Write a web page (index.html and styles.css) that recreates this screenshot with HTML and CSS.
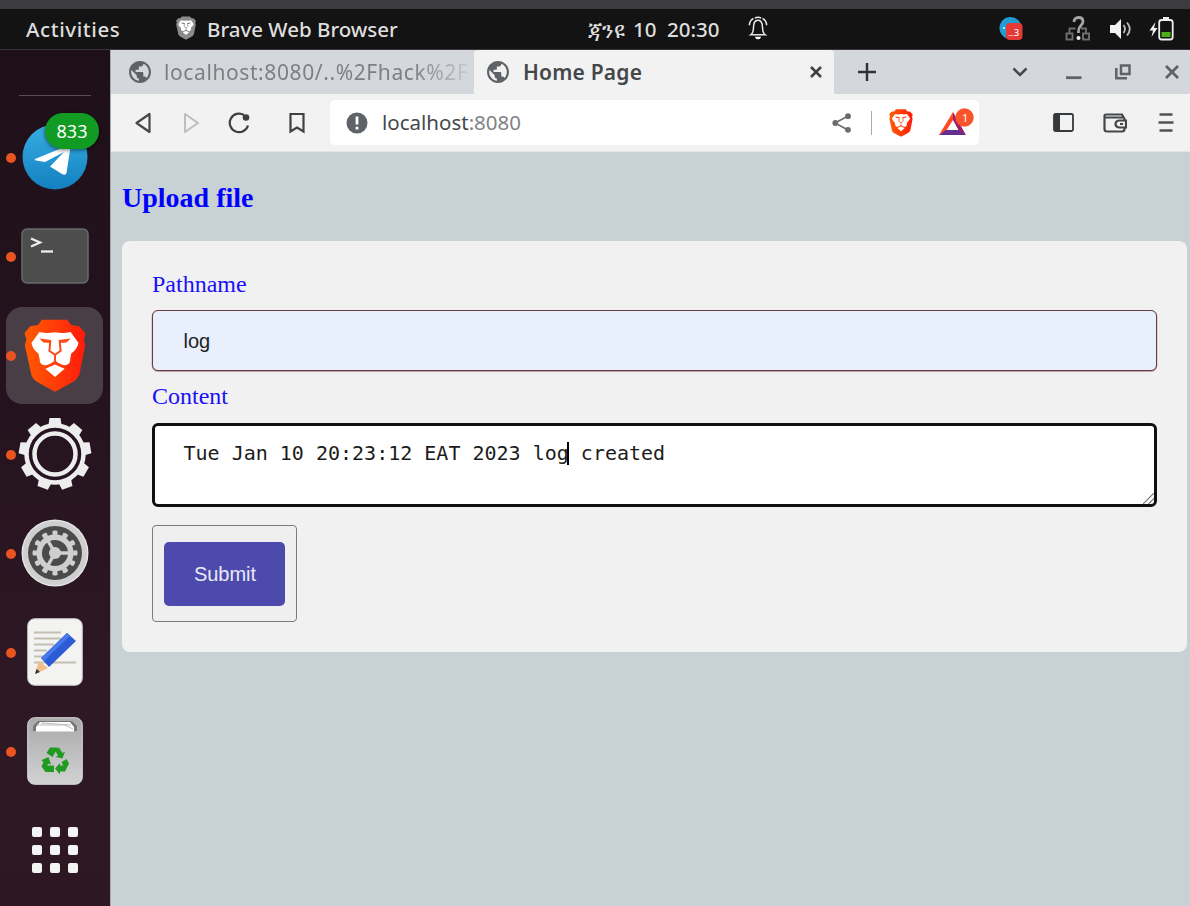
FILE: index.html
```html
<!DOCTYPE html>
<html lang="en">
<head>
<meta charset="utf-8">
<title>Home Page</title>
<link rel="stylesheet" href="styles.css">
</head>
<body>
<svg width="0" height="0" class="defs">
  <defs>
    <linearGradient id="lion" x1="0" x2="1"><stop offset="0" stop-color="#ff5a00"/><stop offset=".55" stop-color="#ff3a08"/><stop offset="1" stop-color="#ff1a0c"/></linearGradient>
    <linearGradient id="sky" x1="0" x2="0" y1="0" y2="1"><stop offset="0" stop-color="#37aee2"/><stop offset="1" stop-color="#1380c0"/></linearGradient>
    <linearGradient id="bin" x1="0" x2="0" y1="0" y2="1"><stop offset="0" stop-color="#a9a9a9"/><stop offset="1" stop-color="#d2d2d2"/></linearGradient>
    <symbol id="shield" viewBox="72 56 186 220">
      <path d="M125 58H202L214 74 238 78 257 100 252 118 256 135 238 225Q232 238 220 245L165 275 110 245Q98 238 94 225L74 135 79 118 73 98 90 78 114 74Z" fill="var(--mane)"/>
      <path d="M118 95Q140 101 165 96 190 101 212 95L236 128Q232 146 214 160L211 175Q212 190 200 195 186 198 165 181 144 198 130 195 118 190 119 178L115 160Q98 148 94 128ZM165 193 194 206 165 231 136 206Z" fill="var(--face)"/>
      <path d="M151 123 148 152 165 164 182 152 179 123M165 163V184" fill="none" stroke="var(--line)" stroke-width="6"/>
      <path d="M118 115 154 119 152 128 130 127ZM212 115 176 119 178 128 200 127Z" fill="var(--line)"/>
    </symbol>
    <symbol id="globe" viewBox="2 2 20 20"><path fill="#5f6368" d="M12 2C6.480 2 2 6.480 2 12s4.480 10 10 10 10-4.480 10-10S17.520 2 12 2zm-1 17.930c-3.950-.49-7-3.850-7-7.930 0-.62.08-1.210.21-1.790L9 15v1c0 1.100.9 2 2 2v1.930zm6.900-2.540c-.26-.81-1-1.390-1.900-1.390h-1v-3c0-.55-.45-1-1-1H8v-2h2c.55 0 1-.45 1-1V7h2c1.100 0 2-.9 2-2v-.41c2.930 1.190 5 4.060 5 7.410 0 2.080-.8 3.970-2.100 5.390z"/></symbol>
  </defs>
</svg>
<div class="screen">
  <header class="topbar">
    <span class="activities">Activities</span>
    <svg class="app-icon gray" width="20" height="24"><use href="#shield"/></svg>
    <span class="app-name">Brave Web Browser</span>
    <span class="clock"><span class="month">ጃንዩ</span><span class="day">10</span><span class="time">20:30</span></span>
    <svg class="bell" width="20" height="26" viewBox="0 0 22 26" fill="none" stroke="#e8e8e8" stroke-width="1.700"><path d="M3 20.500c2-1.500 3-3 3-7.500C6 7 7.500 4.500 11 4.500S16 7 16 13c0 4.500 1 6 3 7.500ZM6 2.500Q1.800 4.500 1.500 10M16 2.500Q20.200 4.500 20.500 10M7.500 2Q11 .5 14.500 2"/><path d="M7.500 22.500h7q-1 3-3.500 3t-3.500-3" fill="#fff" stroke="none"/></svg>
    <div class="tray">
      <svg width="24" height="24" viewBox="0 0 24 24"><circle cx="11.500" cy="11" r="11" fill="#239bd3"/><circle cx="5" cy="11" r="1" fill="#fff"/><rect x="7" y="6" width="16.500" height="17" rx="4" fill="#e53935"/><text x="15" y="18.500" font-size="9" class="tiny">3</text><path d="M9.500 18.500h5" stroke="#f5a5a0"/></svg>
      <svg class="net" width="26" height="26" viewBox="0 0 26 26" fill="none" stroke="#6f6f6f" stroke-width="1.900"><rect x="1.500" y="17.500" width="6" height="6"/><rect x="18" y="17.500" width="6" height="6"/><path d="M4.500 17v-4.500h6M21 17v-4.500h-5"/><path d="M9 6q0-4.500 4.500-4.500T18 5.500C18 9.500 13.500 9 13.500 15v2" stroke="#a5a5a5" stroke-width="2.800"/><circle cx="13.500" cy="22" r="2" fill="#eee" stroke="none"/></svg>
      <svg class="vol" width="24" height="22" viewBox="0 0 24 22"><path d="M1 7h5l6-6v20l-6-6H1Z" fill="#f2f2f2"/><path d="M14.500 7q3 4 0 8M18 4.500q5.500 6.500 0 13" fill="none" stroke="#bbb" stroke-width="1.800"/></svg>
      <svg class="bat" width="25" height="24" viewBox="0 0 25 24"><path d="M6.500 5 .5 13.500H4L2.500 20 8.500 11H5Z" fill="#f2f2f2"/><rect x="10.200" y="3" width="13.500" height="19.500" rx="2.500" fill="none" stroke="#eee" stroke-width="1.800"/><path d="M14 1h6" stroke="#eee" stroke-width="2"/><rect x="12.500" y="15" width="9" height="5" fill="#4caf17"/></svg>
    </div>
  </header>
  <div class="desktop">
    <nav class="dock">
      <div class="rule"></div>
      <div class="slot"><i class="dot"></i>
        <svg width="66" height="66" viewBox="0 0 66 66"><circle cx="33" cy="33" r="32.500" fill="url(#sky)"/><path d="M13 35 46 21.500Q49 20.500 48.300 24L44.500 49Q43.500 52 40 50L28 42.500 42 28 23 38 14 36.500Q12 36 13 35Z" fill="#fff"/></svg>
        <span class="badge">833</span></div>
      <div class="slot"><i class="dot"></i>
        <svg width="68" height="56" viewBox="0 0 68 56"><rect x="1" y="1" width="66" height="54" rx="5" fill="#4d4d4d" stroke="#696969" stroke-width="1.500"/><path d="M10 10.500 19 14.500 10 18.500" fill="none" stroke="#eee" stroke-width="2.300"/><path d="M20 23.500h12" stroke="#eee" stroke-width="2.300"/></svg></div>
      <div class="slot active"><i class="dot"></i>
        <svg class="color" width="62" height="73"><use href="#shield"/></svg></div>
      <div class="slot"><i class="dot"></i>
        <svg width="74" height="74" viewBox="-37 -37 74 74" fill="none" stroke="#ededed"><circle r="28.500" stroke-width="4.500"/><circle r="20.500" stroke-width="4.500"/><g fill="#ededed" stroke="none"><path id="tooth" d="M-6.500-29-5.500-36H5.500L6.500-29Z"/><use href="#tooth" transform="rotate(40)"/><use href="#tooth" transform="rotate(80)"/><use href="#tooth" transform="rotate(120)"/><use href="#tooth" transform="rotate(160)"/><use href="#tooth" transform="rotate(200)"/><use href="#tooth" transform="rotate(240)"/><use href="#tooth" transform="rotate(280)"/><use href="#tooth" transform="rotate(320)"/></g></svg></div>
      <div class="slot"><i class="dot"></i>
        <svg width="68" height="68" viewBox="-34 -34 68 68" fill="none" stroke="#cfcfcf"><circle r="33.500" fill="#e4e4e4" stroke="none"/><circle r="29.500" stroke="#cfcfcf" stroke-width="5"/><circle r="27" fill="#4b4b4b" stroke="none"/><circle r="20" stroke-width="4" pathLength="24" stroke-dasharray="1 1" stroke-dashoffset=".5"/><circle r="15.800" stroke-width="5.500"/><circle r="21.500" stroke-width="2" pathLength="24" stroke-dasharray=".6 1.400" stroke-dashoffset=".3"/><circle r="6" fill="#cfcfcf" stroke="none"/><path d="M0 0H15M0 0-7.500-13M0 0-7.500 13" stroke-width="3.500"/></svg></div>
      <div class="slot"><i class="dot"></i>
        <svg width="56" height="68" viewBox="0 0 56 68"><rect x=".7" y=".7" width="54.600" height="66.600" rx="7" fill="#f3f3f1" stroke="#cbc8c8"/><path d="M7 14.500H34M7 20.500H34M7 26.500H27M7 32.500H20M7 38.500H16M7 44.500H49" stroke="#c3c0b2" stroke-width="2"/><path d="M8 56 12 43 21 50Z" fill="#efbd85"/><path d="M8 56 9.500 51 13 54Z" fill="#333"/><path d="M14 40 40 15 49 23 22 49Z" fill="#2c5bd6"/><path d="M14 40 40 15 43 18 17 43Z" fill="#4778ec"/></svg></div>
      <div class="slot"><i class="dot"></i>
        <svg width="56" height="68" viewBox="0 0 56 68"><rect x=".7" y=".7" width="54.600" height="66.600" rx="7" fill="url(#bin)" stroke="#d9d9d9"/><path d="M6 14V9L11 4H45L50 9V14Z" fill="#777"/><path d="M9 14.500V10L13 5H43L47 10V14.500Z" fill="#fff"/><path d="M10 8H38L46 12M14 6 44 8" fill="none" stroke="#bbb"/>
        <g fill="#209a20"><path d="M19.500 36 23 30.500H31L27.500 36.500 25.500 40ZM32 30.500 35.500 36 38 34.500 35.500 41.500 28.500 40 31 38.500 28 33.500Z"/><path d="M34.500 45 39.500 42 42 46.500 38 54.500H33V57.500L28 51.500 33 46V48.500H36Z"/><path d="M14.500 43 21.500 40 24 47.500 21.500 46.800 20 48.500H27V55H18.500L14.500 49.500 16.500 45.500Z"/></g></svg></div>
      <div class="slot"><div class="grid"><b></b><b></b><b></b><b></b><b></b><b></b><b></b><b></b><b></b></div></div>
    </nav>
    <main class="window">
      <div class="tabs">
        <div class="tab idle"><svg width="22" height="22"><use href="#globe"/></svg><span>localhost:8080/..%2Fhack%2F</span></div>
        <div class="tab current"><svg width="22" height="22"><use href="#globe"/></svg><span>Home Page</span><svg class="close" width="12" height="12" viewBox="0 0 12 12"><path d="M1 1 11 11M11 1 1 11" stroke="#3c4043" stroke-width="2.500"/></svg></div>
        <svg class="plus" width="18" height="18" viewBox="0 0 18 18"><path d="M9 0V18M0 9H18" stroke="#303336" stroke-width="2.400"/></svg>
        <div class="controls">
          <svg width="16" height="10" viewBox="0 0 16 10"><path d="M1.500 1.500 8 8 14.500 1.500" fill="none" stroke="#45484b" stroke-width="2.500"/></svg>
          <svg width="16" height="16" viewBox="0 0 16 16"><path d="M0 13.700H15.500" stroke="#5f6368" stroke-width="2.800"/></svg>
          <svg width="16" height="16" viewBox="0 0 16 16" fill="none" stroke="#5f6368" stroke-width="2.500"><rect x="6" y="1.500" width="8.500" height="8.500"/><path d="M1.300 4V14.200H12"/></svg>
          <svg width="14" height="14" viewBox="0 0 14 14"><path d="M1 1 13 13M13 1 1 13" stroke="#5f6368" stroke-width="2.800"/></svg>
        </div>
      </div>
      <div class="toolbar">
        <svg class="back" width="18" height="22" viewBox="0 0 18 22"><path d="M15.500 2V20L2.500 11Z" fill="none" stroke="#45484b" stroke-width="2.200" stroke-linejoin="round"/></svg>
        <svg class="fwd" width="18" height="22" viewBox="0 0 18 22"><path d="M2 2V20L15 11Z" fill="none" stroke="#bdbdbd" stroke-width="2" stroke-linejoin="round"/></svg>
        <svg class="reload" width="23" height="22" viewBox="0 0 23 22"><path d="M16 3A9.300 9.300 0 1 0 20 13.500" fill="none" stroke="#3c4043" stroke-width="2.200"/><circle cx="18" cy="5.500" r="3.300" fill="#3c4043"/></svg>
        <svg class="mark" width="16" height="22" viewBox="0 0 16 22"><path d="M1.500 2H14.500V19.500L8 15.500 1.500 19.500Z" fill="none" stroke="#3f4245" stroke-width="2.200"/></svg>
        <div class="address">
          <svg width="22" height="22" viewBox="0 0 22 22"><circle cx="11" cy="11" r="10.500" fill="#5f6368"/><path d="M11 4.500V12.500M11 14.800V17.500" stroke="#fff" stroke-width="2.800"/></svg>
          <span class="url">localhost<em>:8080</em></span>
          <svg class="share" width="20" height="20" viewBox="0 0 20 20"><path d="M16 3 3 10 16 17" fill="none" stroke="#6c6c6c" stroke-width="1.600"/><g fill="#6c6c6c"><circle cx="3.300" cy="10" r="2.900"/><circle cx="16" cy="3.200" r="2.900"/><circle cx="16" cy="16.800" r="2.900"/></g></svg>
          <div class="bar"></div>
          <svg class="color lion" width="24" height="28"><use href="#shield"/></svg>
          <svg class="bat-icon" width="36" height="28" viewBox="0 0 36 28"><path d="M0 27 14 4V12L7 23Z" fill="#ff4724"/><path d="M14 4 27 27 20 23 14 12Z" fill="#9e1f63"/><path d="M0 27 7 22H20L27 27Z" fill="#662d91"/><circle cx="25.500" cy="9.500" r="9.200" fill="#fb542b"/><text x="23" y="13.500" font-size="11" class="tiny">1</text></svg>
        </div>
        <svg class="side" width="21" height="19" viewBox="0 0 21 19"><rect x="1" y="1" width="19" height="17" rx="1.500" fill="none" stroke="#36393c" stroke-width="1.800"/><path d="M1 1H7V18H1Z" fill="#36393c"/></svg>
        <svg class="wallet" width="24" height="20" viewBox="0 0 24 20" fill="none" stroke="#45484b" stroke-width="2.200"><path d="M21.500 7V6L19 1.500H3Q1.500 1.500 1.500 3V16Q1.500 18.500 4 18.500H19Q21.500 18.500 21.500 16V14.500M1.500 4.500H20"/><path d="M23 7.500H16Q12.500 8 12.500 11T16 14.500H23ZM17 11H20"/></svg>
        <svg class="menu" width="16" height="19" viewBox="0 0 16 19"><path d="M1.500 1.500H14.500M.5 9.500H15.500M1.500 17.500H14.500" stroke="#505356" stroke-width="2.500"/></svg>
      </div>
      <section class="page">
        <h3>Upload file</h3>
        <form class="card">
          <label>Pathname</label>
          <div class="field">log</div>
          <label>Content</label>
          <div class="area">Tue Jan 10 20:23:12 EAT 2023 log<i class="caret"></i> created<svg class="grip" width="11" height="11" viewBox="0 0 11 11"><path d="M0 11 11 0M5.500 11 11 5.500" stroke="#777" stroke-width="1.200"/></svg></div>
          <div class="outer"><div class="submit">Submit</div></div>
        </form>
      </section>
    </main>
  </div>
</div>
</body>
</html>
```

FILE: styles.css
```css
* { box-sizing: border-box; }
body { margin: 0; font-family: "Noto Sans", "Open Sans", sans-serif; }
svg { display: block; flex: none; }
.defs { position: absolute; }
.screen { width: 1190px; height: 906px; overflow: hidden; display: flex; flex-direction: column; border-top: 9px solid #3c3c3e; }
.color { --mane: url(#lion); --face: #fff; --line: #ff4a1c; }
.gray { --mane: #8b8b8b; --face: #fff; --line: #777; }
.tiny { fill: #fff; font-family: "Noto Sans", sans-serif; }

.topbar { height: 41px; flex: none; display: flex; align-items: center; background: #131313; color: #dedede; font-size: 20.5px; font-weight: 500; padding-left: 26px; white-space: nowrap; border-bottom: 1px solid #383338; }
.activities { width: 150px; letter-spacing: .6px; }
.app-icon { margin-right: 11px; margin-top: -3px; }
.app-name { width: 381px; letter-spacing: 0; }
.clock { display: flex; width: 160px; }
.month { width: 45px; font-size: 22px; line-height: 28px; }
.day { width: 34px; }
.bell { margin-top: -3px; }
.tray { display: flex; align-items: center; margin-left: 231px; margin-top: -1px; }
.net { margin-left: 42px; }
.vol { margin-left: 18px; }
.bat { margin-left: 16px; }

.desktop { display: flex; flex: 1; min-height: 0; }
.dock { width: 110px; background: linear-gradient(#1e1019, #24131e 40%, #2e1824 75%, #2c1723); display: flex; flex-direction: column; align-items: stretch; }
.rule { height: 1px; flex: none; background: #574c54; margin: 45px 19px 11.500px; }
.slot { height: 99px; flex: none; display: flex; align-items: center; justify-content: center; position: relative; }
.slot > svg { position: relative; left: -.5px; }
.dot { position: absolute; left: 6px; top: 45px; width: 10px; height: 10px; border-radius: 50%; background: #e95420; z-index: 1; }
.badge { position: absolute; left: 45px; top: 5px; width: 54px; height: 36px; border-radius: 18px; background: #129b22; color: #fff; font-size: 18px; line-height: 36px; text-align: center; box-shadow: 0 1px 4px rgba(0,0,0,.55); }
.active::before { content: ""; position: absolute; left: 6px; top: 1px; width: 97px; height: 97px; border-radius: 16px; background: #4a3e46; }
.grid { display: grid; grid-template-columns: repeat(3, 10px); gap: 8px; }
.grid b { width: 10px; height: 10px; border-radius: 2px; background: #f3f3f3; }

.window { flex: 1; min-width: 0; border-left: 1px solid #a9a9ad; background: #c8d1d3; display: flex; flex-direction: column; }
.tabs { height: 44px; flex: none; display: flex; align-items: center; background: #d4d8dc; font-size: 21px; }
.tab { height: 44px; display: flex; align-items: center; }
.idle { width: 363px; padding-left: 18px; color: #7d8083; }
.idle span { margin-left: 13px; width: 304px; overflow: hidden; white-space: nowrap; letter-spacing: .6px; -webkit-mask-image: linear-gradient(90deg, #000 82%, transparent 103%); }
.current { width: 360px; background: #f2f2f2; padding: 0 12px 0 13px; color: #45484b; font-weight: 600; border-radius: 4px 4px 0 0; }
.current span { margin-left: 14px; flex: 1; letter-spacing: .2px; }
.plus { margin-left: 24px; }
.controls { display: flex; align-items: center; margin-left: 136px; }
.controls svg + svg { margin-left: 38px; }
.controls svg:nth-child(3) { margin-left: 33px; }
.controls svg:nth-child(4) { margin-left: 34px; }

.toolbar { height: 58px; flex: none; display: flex; align-items: center; background: #f2f2f2; border-bottom: 1px solid #e2e5e6; }
.back { margin-left: 23px; }
.fwd { margin-left: 31px; }
.reload { margin-left: 27px; }
.mark { margin-left: 38px; }
.address { width: 649px; height: 45px; margin-left: 25px; border-radius: 5px; background: #fff; display: flex; align-items: center; padding-left: 16px; }
.url { margin: -2px 0 0 14px; width: 450px; font-size: 20.5px; color: #45484b; }
.url em { font-style: normal; color: #808386; }
.bar { width: 1px; height: 24px; background: #aaa; margin: 0 17px 0 19px; }
.bat-icon { margin-left: 26px; margin-top: -2px; }
.side { margin-left: 74px; }
.wallet { margin-left: 29px; }
.menu { margin-left: 31px; }

.page { padding: 30px 3px 0 11px; font-family: "Liberation Serif", serif; }
h3 { margin: 0 0 27px; font-size: 28px; line-height: 32px; color: #00f; }
.card { display: flex; flex-direction: column; height: 411px; padding: 30px; background: #f1f1f1; border-radius: 8px; }
label { font-size: 24px; line-height: 27px; color: #1b10f5; }
.field { height: 61px; flex: none; margin: 12px 0; border: 1px solid #6b3b45; box-shadow: 0 .5px 0 .3px rgba(107,59,69,.55); border-radius: 6px; background: #e8effd; padding-left: 30.500px; font: 20px/61px "Liberation Sans", sans-serif; color: #222; }
.area { height: 84px; flex: none; margin-top: 13px; border: 3px solid #101010; border-radius: 6px; background: #fff; padding: 15px 0 0 28.500px; font: 20px/24px "DejaVu Sans Mono", monospace; color: #1c1c1c; position: relative; white-space: pre; }
.caret { display: inline-block; width: 2px; height: 23px; margin: 0 0 0 -2px; background: #000; vertical-align: -5px; }
.grip { position: absolute; right: 0; bottom: 0; }
.outer { width: 145px; height: 97px; margin-top: 18px; border: 1px solid #7b7b7b; border-radius: 4px; background: #efefef; display: flex; align-items: center; justify-content: center; }
.submit { width: 121px; height: 64px; border-radius: 5px; background: #4c4bad; color: #e9e9f5; text-align: center; text-indent: 1px; font: 20px/64px "Liberation Sans", sans-serif; }
```
